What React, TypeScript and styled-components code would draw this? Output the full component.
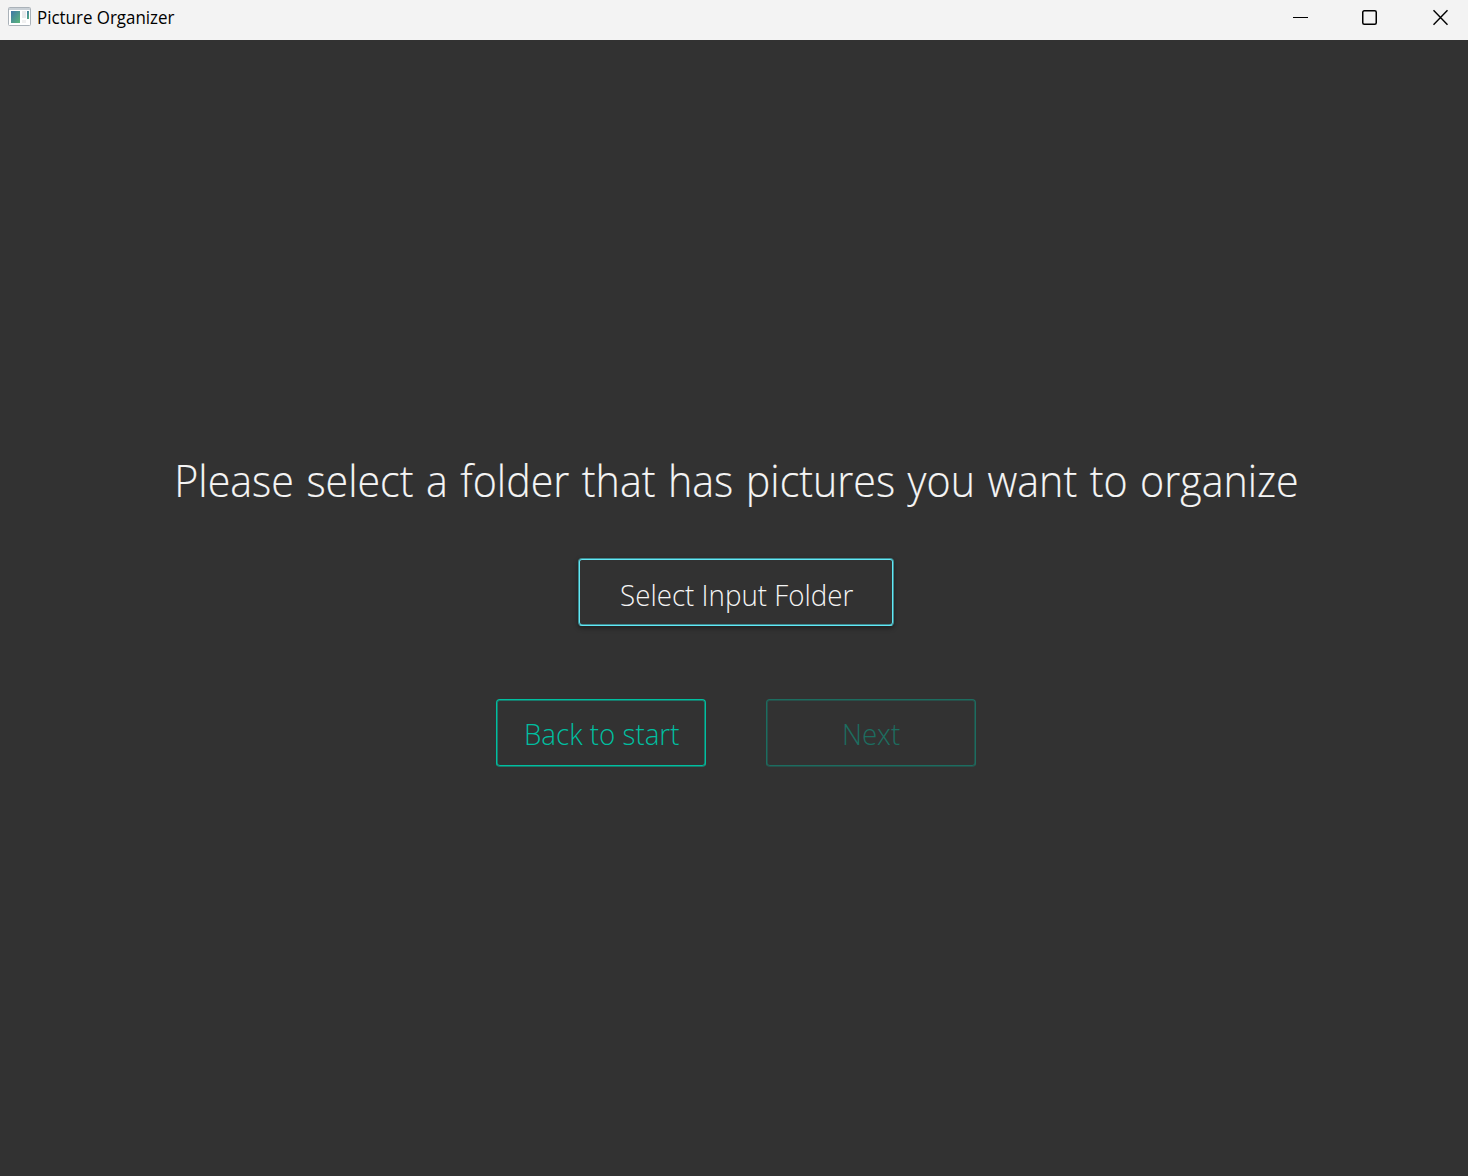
import React from 'react';
import styled, { createGlobalStyle } from 'styled-components';

const GlobalStyle = createGlobalStyle`
  body {
    margin: 0;
    background: #323232;
    font-family: 'Segoe UI', 'Open Sans', 'Noto Sans', sans-serif;
  }
`;

const Window = styled.div`
  display: flex;
  flex-direction: column;
  height: 100vh;
  overflow: hidden;
`;

const TitleBar = styled.header`
  display: flex;
  align-items: flex-start;
  height: 40px;
  box-sizing: border-box;
  padding: 7px 0 0 8px;
  background: #f3f3f3;
  color: #000;
`;

const WindowTitle = styled.span`
  flex: 1;
  margin-left: 6px;
  font-size: 18px;
  line-height: 20px;
  white-space: nowrap;
  transform: scaleX(0.94);
  transform-origin: left;
`;

const WindowControls = styled.div`
  display: flex;
  padding: 2px 19px 0 0;
`;

const ControlIcon = styled.svg`
  width: 16px;
  height: 17px;
  fill: none;
  stroke: #000;

  &:nth-child(2) {
    margin: 0 55px 0 53px;
  }
`;

const Content = styled.main`
  flex: 1;
  display: flex;
  flex-direction: column;
  align-items: center;
  box-sizing: border-box;
  padding: 410px 0 0 4px;
`;

// Light text is drawn slightly condensed
const Heading = styled.h1`
  margin: 0;
  font-size: 45px;
  font-weight: 300;
  line-height: 60px;
  word-spacing: 2px;
  color: #f5f5f5;
  white-space: nowrap;
  transform: scaleX(0.915);
  -webkit-text-stroke: 0.15px #f5f5f5;
`;

const ButtonRow = styled.div`
  display: flex;
  gap: 60px;
  margin-top: 73px;
`;

const Button = styled.button<{ $color: string; $edge: string }>`
  width: 210px;
  height: 68px;
  padding: 0;
  background: #323232;
  border: 1px solid;
  border-color: ${({ $color, $edge }) => `${$color} ${$color} ${$edge} ${$color}`};
  border-radius: 4px;
  box-shadow:
    inset 0 -1px 0 ${(props) => props.$color},
    inset 0 1px 0 ${(props) => props.$edge},
    inset 1px 0 0 ${(props) => props.$edge},
    inset -1px 0 0 ${(props) => props.$edge};
  color: ${(props) => props.$color};
  font-family: inherit;
  font-size: 30px;
  font-weight: 300;
  white-space: nowrap;

  &:disabled {
    opacity: 0.42;
  }
`;

const FolderButton = styled(Button)`
  width: 316px;
  margin-top: 48px;
  padding-top: 4px;
  border-color: ${({ $color, $edge }) => `${$edge} ${$edge} ${$color} ${$edge}`};
  box-shadow:
    inset 0 1px 0 ${(props) => props.$color},
    inset 1px 0 0 ${(props) => props.$color},
    inset -1px 0 0 ${(props) => props.$color},
    inset 0 -1px 0 ${(props) => props.$edge},
    0 2px 5px rgba(0, 0, 0, 0.4);
  color: #f5f5f5;
`;

const ButtonLabel = styled.span`
  display: inline-block;
  transform: translateX(0.5px) scaleX(0.924);
`;

const AppIcon = () => (
  <svg width="23" height="20" viewBox="0 0 23 20">
    <defs>
      <linearGradient id="screen" x1="0" y1="0" x2="1" y2="1">
        <stop offset="0" stopColor="#3f76a8" />
        <stop offset="1" stopColor="#5cb87a" />
      </linearGradient>
    </defs>
    <rect x="0.5" y="0.5" width="22" height="18" rx="1" fill="#fff" stroke="#aab2b9" />
    <rect x="1" y="1" width="21" height="2" fill="#c9d0d6" />
    <rect x="3" y="4" width="9" height="12" fill="url(#screen)" />
    <rect x="14" y="4" width="4" height="7" fill="#e9eaeb" />
    <rect x="14" y="13" width="4" height="3" fill="#f0f0f0" />
    <rect x="19" y="4" width="2" height="8" fill="url(#screen)" />
  </svg>
);

const App: React.FC = () => {
  return (
    <Window>
      <GlobalStyle />
      <TitleBar>
        <AppIcon />
        <WindowTitle>Picture Organizer</WindowTitle>
        <WindowControls>
          <ControlIcon viewBox="0 0 16 17">
            <path d="M0 8.5H15" />
          </ControlIcon>
          <ControlIcon viewBox="0 0 16 17" strokeWidth="1.5">
            <rect x="0.75" y="1.75" width="13.5" height="13.5" rx="1.5" />
          </ControlIcon>
          <ControlIcon viewBox="0 0 16 17" strokeWidth="1.4">
            <path d="M0.5 1.2L14.5 15.8M14.5 1.2L0.5 15.8" />
          </ControlIcon>
        </WindowControls>
      </TitleBar>
      <Content>
        <Heading>Please select a folder that has pictures you want to organize</Heading>
        <FolderButton $color="#62e8f5" $edge="#3f8e95">
          <ButtonLabel>Select Input Folder</ButtonLabel>
        </FolderButton>
        <ButtonRow>
          <Button $color="#00bfa0" $edge="#19796a">
            <ButtonLabel>Back to start</ButtonLabel>
          </Button>
          <Button $color="#00bfa0" $edge="#19796a" disabled>
            <ButtonLabel>Next</ButtonLabel>
          </Button>
        </ButtonRow>
      </Content>
    </Window>
  );
};

export default App;
